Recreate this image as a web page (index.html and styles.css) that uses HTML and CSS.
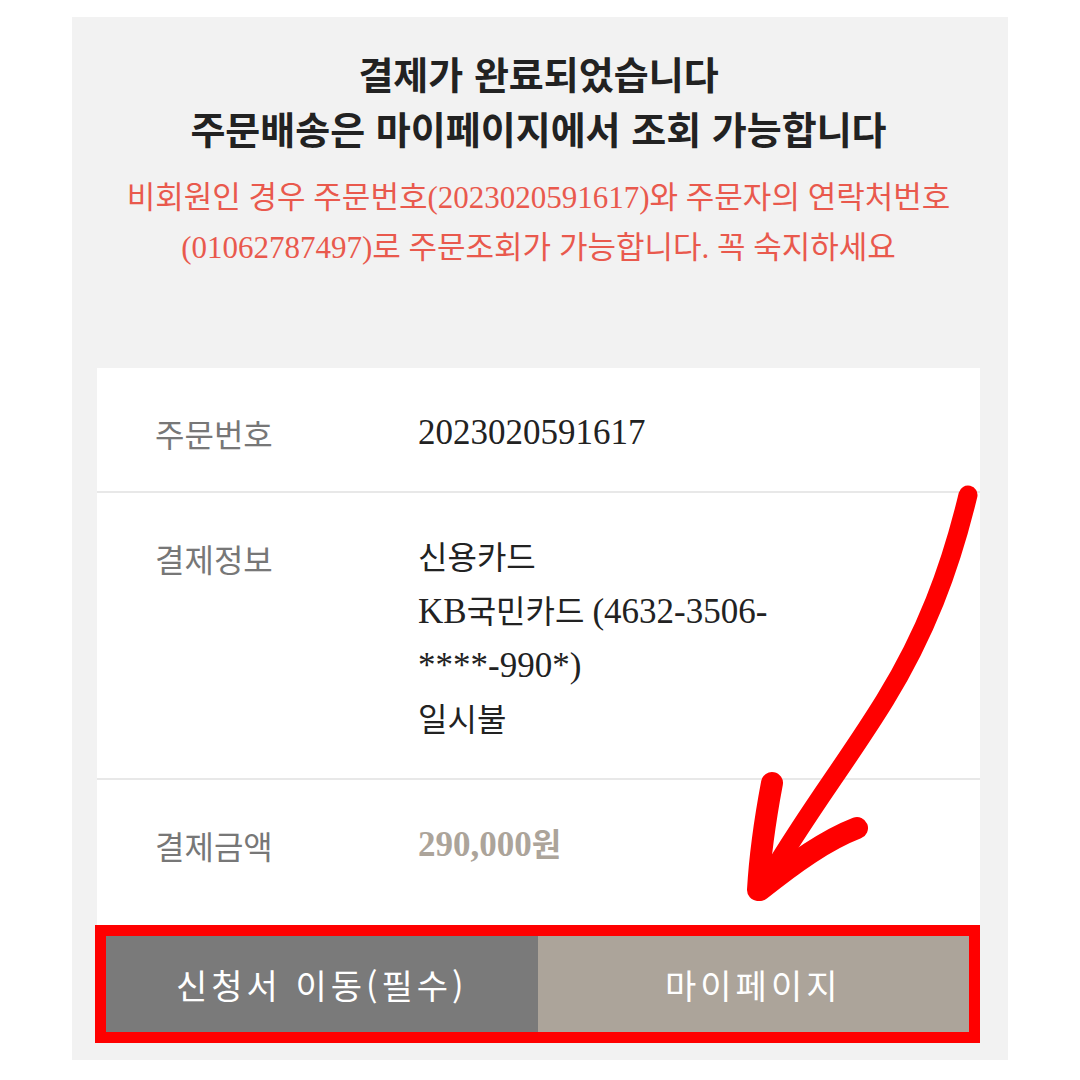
FILE: index.html
```html
<!DOCTYPE html>
<html lang="ko">

<head>
    <meta charset="UTF-8" />
    <title>주문완료</title>
    <link rel="stylesheet" href="styles.css">
</head>

<body>
    <div class="page">
        <div class="panel">
            <div class="complete-head">
                <h2>결제가 완료되었습니다<br>주문배송은 마이페이지에서 조회 가능합니다</h2>
                <p class="notice">비회원인 경우 주문번호(2023020591617)와 주문자의 연락처번호<br>(01062787497)로 주문조회가 가능합니다. 꼭 숙지하세요</p>
            </div>

            <div class="order-card">
                <dl class="order-row">
                    <dt>주문번호</dt>
                    <dd><span class="num">2023020591617</span></dd>
                </dl>
                <dl class="order-row">
                    <dt>결제정보</dt>
                    <dd>신용카드<br><span class="num">KB</span>국민카드 <span class="num">(4632-3506-</span><br><span class="num">****-990*)</span><br>일시불</dd>
                </dl>
                <dl class="order-row last">
                    <dt>결제금액</dt>
                    <dd class="price"><span class="num">290,000</span>원</dd>
                </dl>

                <div class="btn-box">
                    <button class="btn btn-apply">신청서 이동(필수)</button>
                    <button class="btn btn-mypage">마이페이지</button>
                </div>
            </div>
        </div>

        <!-- hand drawn arrow pointing at the buttons -->
        <svg class="arrow" width="1080" height="1080" viewBox="0 0 1080 1080">
            <g fill="none" stroke="#ff0000" stroke-linecap="round" stroke-linejoin="round">
                <path d="M968 495 C950 570 925 635 885 700 S805 815 764 886" stroke-width="19" />
                <path d="M772 783 C765 820 760 855 758 890" stroke-width="22" />
                <path d="M857 828 C826 840 795 862 760 890" stroke-width="22" />
            </g>
        </svg>
    </div>
</body>

</html>
```

FILE: styles.css
```css
body {
    margin: 0;
    background: #fff;
    font-family: "Noto Sans CJK KR", sans-serif;
}

.page {
    position: relative;
    width: 1080px;
    height: 1080px;
    padding: 17px 72px 0;
    box-sizing: border-box;
}

.panel {
    background: #f2f2f2;
    padding: 28px 28px 17px 25px;
}

.complete-head {
    text-align: center;
}

.complete-head h2 {
    margin: 0;
    font-size: 38px;
    line-height: 55px;
    font-weight: 700;
    color: #222;
}

.notice {
    margin: 18px 0 0;
    font-family: "Liberation Serif", "Noto Sans CJK KR", serif;
    font-size: 31px;
    line-height: 50px;
    color: #e9594d;
}

.order-card {
    margin-top: 95px;
    background: #fff;
}

.order-row {
    display: grid;
    grid-template-columns: 263px 1fr;
    margin: 0;
    padding: 38px 0 31px 58px;
    border-bottom: 2px solid #e8e8e8;
}

.order-row dt {
    font-size: 32px;
    line-height: 54px;
    color: #777;
}

.order-row dd {
    margin: 0;
    font-family: "Liberation Serif", "Noto Sans CJK KR", serif;
    font-size: 32px;
    line-height: 54px;
    color: #222;
}

.order-row .num {
    font-size: 35px;
}

.order-row.last {
    border-bottom: 0;
    padding-bottom: 53px;
}

.order-row dd.price {
    font-weight: 700;
    color: #aca49a;
}

.btn-box {
    display: flex;
    margin-left: -2px;
    border: 11px solid #ff0000;
}

.btn {
    flex: 1;
    height: 96px;
    border: none;
    font-family: "Noto Sans CJK KR", sans-serif;
    font-size: 34px;
    letter-spacing: 4px;
    color: #fff;
    cursor: pointer;
}

.btn-apply {
    background: #7a7a7a;
}

.btn-mypage {
    background: #aca49a;
}

.arrow {
    position: absolute;
    top: 0;
    left: 0;
    pointer-events: none;
}
```
